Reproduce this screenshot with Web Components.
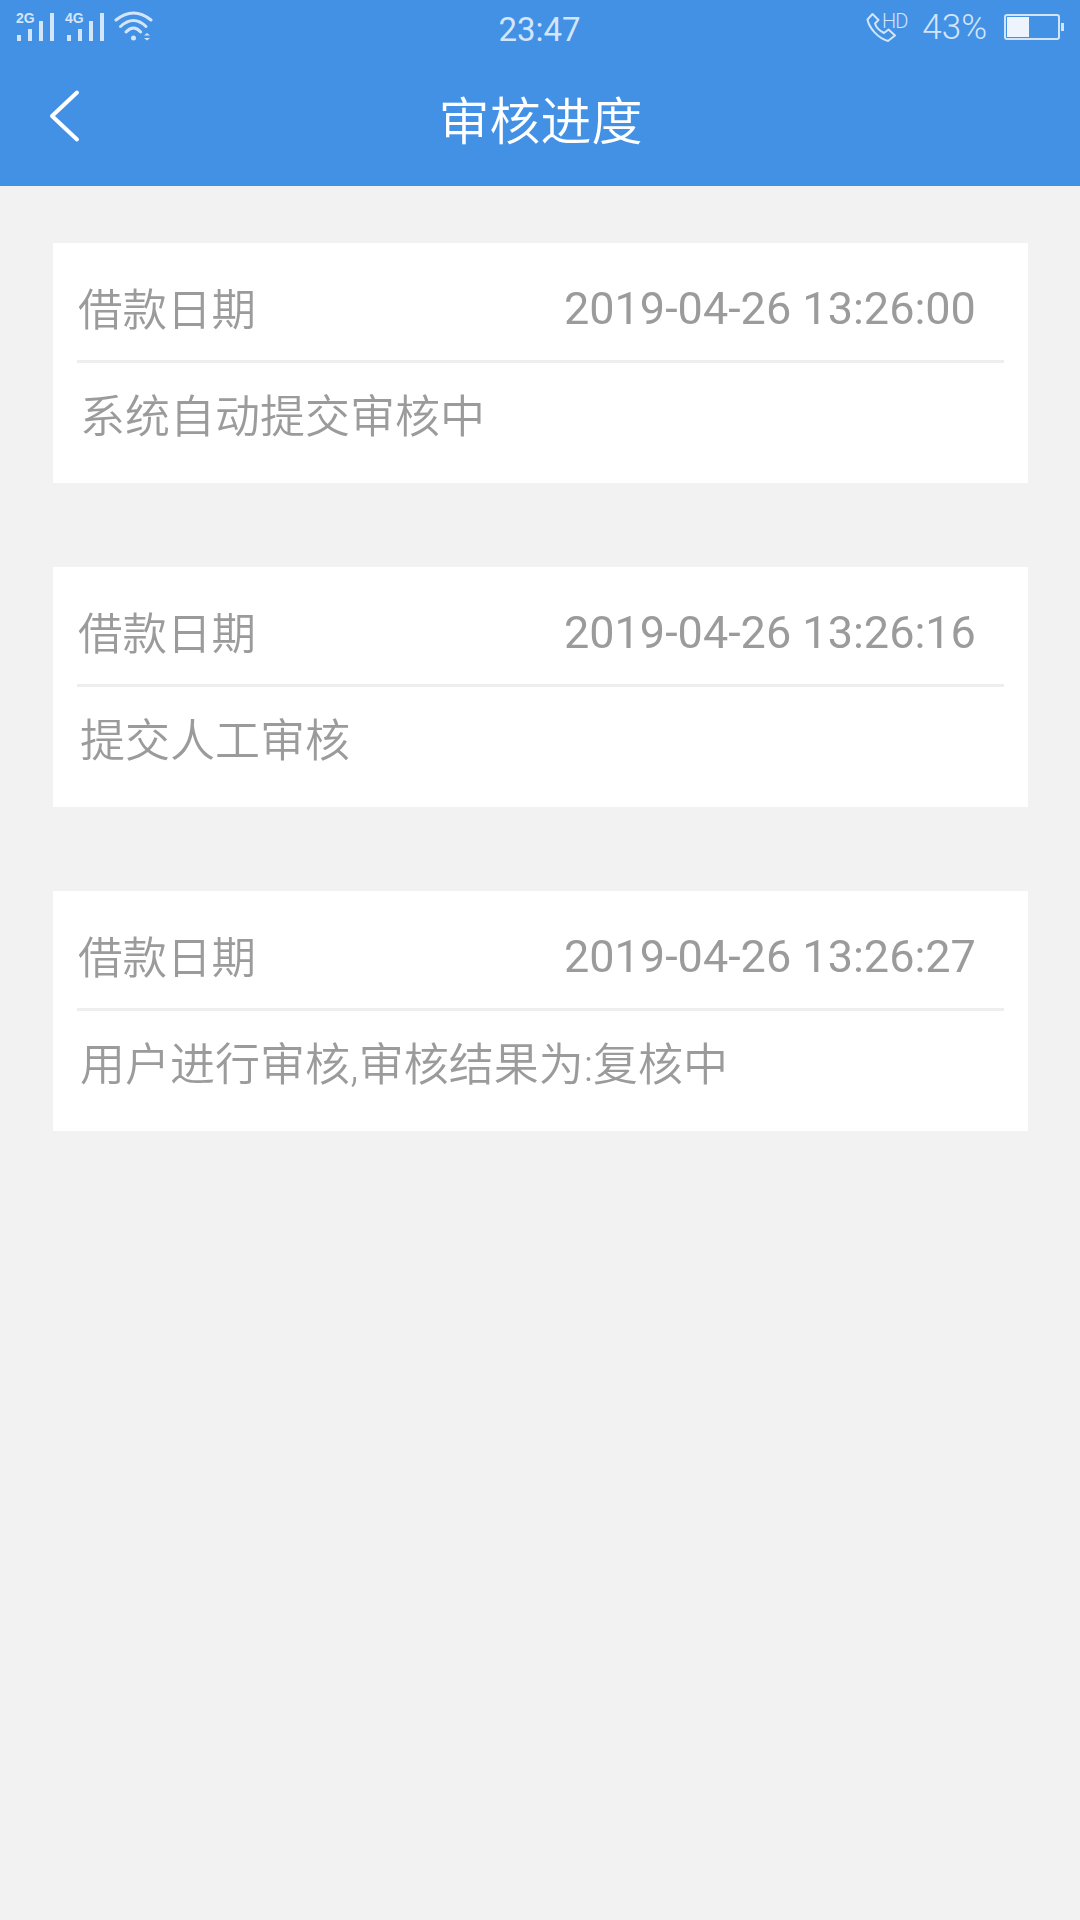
<!DOCTYPE html>
<html lang="zh-CN">
<head>
<meta charset="utf-8">
<title>审核进度</title>
<style>
  html, body { margin: 0; padding: 0; background: #f2f2f2; }
  body { width: 1080px; height: 1920px; overflow: hidden; font-family: Roboto, "Noto Sans CJK SC", sans-serif; }
</style>
</head>
<body>
<app-page>
  <app-header title="审核进度"></app-header>
  <audit-card date="2019-04-26 13:26:00">系统自动提交审核中</audit-card>
  <audit-card date="2019-04-26 13:26:16">提交人工审核</audit-card>
  <audit-card date="2019-04-26 13:26:27">用户进行审核,审核结果为:复核中</audit-card>
</app-page>

<script>
class AppPage extends HTMLElement {
  connectedCallback() {
    this.attachShadow({ mode: 'open' });
    this.shadowRoot.innerHTML = `
      <style>
        :host { display: flex; flex-direction: column; gap: 84px; }
        ::slotted(app-header) { margin-bottom: -27px; }
      </style>
      <slot></slot>
    `;
  }
}

class StatusBar extends HTMLElement {
  connectedCallback() {
    this.attachShadow({ mode: 'open' });
    this.shadowRoot.innerHTML = `
      <style>
        :host {
          display: grid;
          grid-template-columns: 1fr auto 1fr;
          align-items: center;
          height: 58px;
          padding: 0 16px;
          color: #d3e5fa;
          font-family: Roboto, sans-serif;
          font-weight: 300;
        }
        .left, .right { display: flex; align-items: center; }
        .right { justify-content: flex-end; }
        svg { display: block; }
        .time { font-size: 33px; font-weight: 400; margin: 1px 1px 0 0; }
        .hd { font-size: 20px; font-weight: 300; margin-left: -14px; margin-top: -16px; letter-spacing: -1px; }
        .pct { font-size: 35px; margin: -3px 17px 0 15px; }
        .gen { font: 700 14px "Liberation Sans", sans-serif; fill: currentColor; }
      </style>
      <div class="left">
        <svg width="138" height="44" viewBox="0 7 138 44" fill="currentColor">
          <text class="gen" x="0" y="23">2G</text>
          <rect x="1" y="35" width="4" height="6"/><rect x="12" y="29" width="4" height="12"/>
          <rect x="23" y="21" width="4" height="20"/><rect x="34" y="13" width="4" height="28"/>
          <text class="gen" x="49" y="23">4G</text>
          <rect x="51" y="35" width="4" height="6"/><rect x="62" y="29" width="4" height="12"/>
          <rect x="73" y="21" width="4" height="20"/><rect x="84" y="13" width="4" height="28"/>
          <g fill="none" stroke="currentColor" stroke-width="3" stroke-linecap="round">
            <path d="M100 20 Q117.500 6 135 20"/>
            <path d="M104.500 26.500 Q117.500 14.500 130 26.500"/>
            <path d="M110 32 Q117.500 24 124.700 32"/>
          </g>
          <circle cx="117.500" cy="38" r="2.500"/>
          <path d="M128 35.500 L131 33 L134 35.500 Z M128 38 H134 L131 40.500 Z"/>
        </svg>
      </div>
      <div class="time">23:47</div>
      <div class="right">
        <svg width="30" height="44" viewBox="0 7 30 44" fill="none" stroke="currentColor" stroke-width="2" stroke-linejoin="round">
          <path d="M6.500 14 L1.500 19.500 C3 28 12 38 22 41 L29 35.500 L22.500 29.500 L18 33 C14 31 10 27 9 23.500 L12.500 20 Z"/>
        </svg>
        <span class="hd">HD</span>
        <span class="pct">43%</span>
        <svg width="60" height="44" viewBox="0 7 60 44">
          <rect x="1" y="15" width="54" height="24" rx="2" fill="none" stroke="currentColor" stroke-width="2"/>
          <rect x="3" y="17" width="22" height="20" fill="#edf4fd"/>
          <rect x="57" y="23" width="3" height="8" fill="currentColor"/>
        </svg>
      </div>
    `;
  }
}

class AppHeader extends HTMLElement {
  connectedCallback() {
    this.attachShadow({ mode: 'open' });
    this.shadowRoot.innerHTML = `
      <style>
        :host { display: block; height: 186px; background: #4291e5; color: #fff; }
        .bar {
          display: grid;
          grid-template-columns: 1fr auto 1fr;
          align-items: center;
          height: 128px;
        }
        .back { display: block; margin-left: 48px; margin-top: -12px; }
        h1 {
          margin: -7px 0 0 1px;
          font: 350 51px/1 "Noto Sans CJK SC", sans-serif;
        }
      </style>
      <status-bar></status-bar>
      <div class="bar">
        <svg class="back" width="34" height="56" viewBox="0 0 34 56" fill="none" stroke="#fff" stroke-width="4" stroke-linecap="round" stroke-linejoin="round">
          <path d="M29 4.500 L4 28 L29 51.500"/>
        </svg>
        <h1>${this.getAttribute('title')}</h1>
      </div>
    `;
  }
}

class AuditCard extends HTMLElement {
  connectedCallback() {
    this.attachShadow({ mode: 'open' });
    this.shadowRoot.innerHTML = `
      <style>
        :host {
          display: block;
          width: 975px;
          margin-left: 53px;
          padding: 0 24px;
          box-sizing: border-box;
          background: #fff;
          color: #9b9b9b;
          font-size: 45px;
        }
        .head {
          display: flex;
          justify-content: space-between;
          align-items: center;
          height: 117px;
          padding-right: 28px;
          border-bottom: 3px solid #eeeeee;
        }
        .label, .date, .note span { will-change: transform; }
        .label { font-family: "Noto Sans CJK SC", sans-serif; font-size: 44.500px; font-weight: 350; margin: 10px 0 0 1px; }
        .date { font-family: Roboto, sans-serif; color: #9b9b9b; margin-top: 14px; }
        .note {
          height: 120px;
          line-height: 110px;
          padding-left: 3px;
          font-family: Roboto, "Noto Sans CJK SC", sans-serif;
          font-weight: 350;
        }
        .note span { display: inline-block; }
      </style>
      <div class="head">
        <span class="label">借款日期</span>
        <span class="date">${this.getAttribute('date')}</span>
      </div>
      <div class="note"><span><slot></slot></span></div>
    `;
  }
}

customElements.define('app-page', AppPage);
customElements.define('status-bar', StatusBar);
customElements.define('app-header', AppHeader);
customElements.define('audit-card', AuditCard);
</script>
</body>
</html>
